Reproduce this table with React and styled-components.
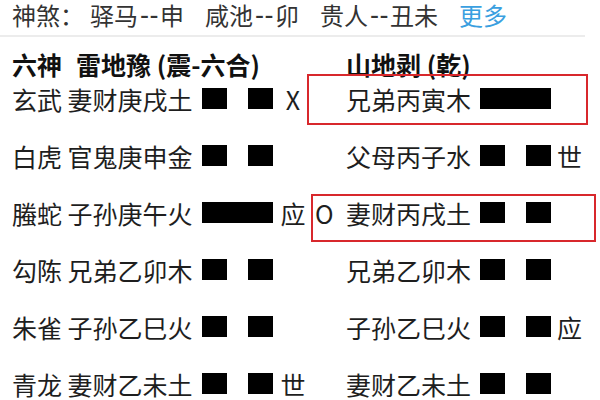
import React from "react";
import styled, { createGlobalStyle } from "styled-components";

const GlobalStyle = createGlobalStyle`
  html, body { margin: 0; padding: 0; background: #fff; }
  body {
    font-family: "Noto Sans CJK SC", "Noto Sans", sans-serif;
    color: #222;
  }
`;

const Page = styled.div`
  width: 600px;
  height: 400px;
  overflow: hidden;
  background: #fff;
`;

const ShenshaBar = styled.div`
  display: flex;
  align-items: center;
  height: 30px;
  padding: 0 12px;
  font-size: 24px;
  line-height: 28px;
  color: #333;
  white-space: nowrap;
`;

const Label = styled.span`
  margin-right: 6px;
`;

const Group = styled.span`
  display: inline-flex;
  align-items: center;
  margin-right: 21px;
`;

const Dash = styled.span`
  font-family: "Liberation Sans", sans-serif;
  font-size: 27px;
  letter-spacing: 0.5px;
  margin: 0 1px 0 2px;
`;

const More = styled.span`
  color: #3a9fe0;
`;

const Divider = styled.div`
  width: 585px;
  height: 2px;
  margin-top: 5px;
  background: #ececec;
`;

const HeaderRow = styled.div`
  display: grid;
  grid-template-columns: 334px 1fr;
  margin-top: 10px;
  height: 34px;
  padding-left: 12px;
  font-size: 25px;
  font-weight: 700;
  line-height: 34px;
  color: #111;
  white-space: nowrap;
`;

const HeadTitle = styled.span`
  margin-left: 14px;
`;

const Rows = styled.div`
  display: flex;
  flex-direction: column;
`;

const Row = styled.div`
  position: relative;
  display: grid;
  grid-template-columns: 190px 71px 38px 35px 134px 71px auto;
  align-items: start;
  height: 57px;
  padding-left: 12px;
  font-size: 25px;
  line-height: 36px;
  color: #1e1e1e;
  white-space: nowrap;
`;

const Cell = styled.span``;

const Marker = styled.span`
  text-align: center;
  padding-left: 2px;
`;

const Moving = styled.span`
  padding-left: 4px;
`;

const RightMarker = styled.span`
  padding-left: 6px;
`;

const Bars = styled.span`
  display: flex;
  justify-content: space-between;
  margin-top: 7px;
  height: 21px;
  width: 71px;
`;

const Seg = styled.span`
  display: block;
  height: 21px;
  width: ${(p) => (p.$full ? "71px" : "25px")};
  background: #000;
`;

const RedBox = styled.div`
  position: absolute;
  left: ${(p) => p.$left}px;
  top: ${(p) => p.$top}px;
  width: ${(p) => p.$width}px;
  height: ${(p) => p.$height}px;
  box-sizing: border-box;
  border: 2px solid #d8282c;
  pointer-events: none;
`;

const Line = ({ yang }) => (
  <Bars>
    {yang ? (
      <Seg $full />
    ) : (
      <>
        <Seg />
        <Seg />
      </>
    )}
  </Bars>
);

const rows = [
  {
    left: "玄武 妻财庚戌土",
    lYang: false,
    lMark: "X",
    moving: "",
    right: "兄弟丙寅木",
    rYang: true,
    rMark: "",
    box: { left: 307, top: -7, width: 281, height: 51 },
  },
  {
    left: "白虎 官鬼庚申金",
    lYang: false,
    lMark: "",
    moving: "",
    right: "父母丙子水",
    rYang: false,
    rMark: "世",
  },
  {
    left: "螣蛇 子孙庚午火",
    lYang: true,
    lMark: "应",
    moving: "O",
    right: "妻财丙戌土",
    rYang: false,
    rMark: "",
    box: { left: 311, top: -1, width: 285, height: 48 },
  },
  {
    left: "勾陈 兄弟乙卯木",
    lYang: false,
    lMark: "",
    moving: "",
    right: "兄弟乙卯木",
    rYang: false,
    rMark: "",
  },
  {
    left: "朱雀 子孙乙巳火",
    lYang: false,
    lMark: "",
    moving: "",
    right: "子孙乙巳火",
    rYang: false,
    rMark: "应",
  },
  {
    left: "青龙 妻财乙未土",
    lYang: false,
    lMark: "世",
    moving: "",
    right: "妻财乙未土",
    rYang: false,
    rMark: "",
  },
];

export default function App() {
  return (
    <Page>
      <GlobalStyle />
      <ShenshaBar>
        <Label>神煞：</Label>
        <Group>
          驿马<Dash>--</Dash>申
        </Group>
        <Group>
          咸池<Dash>--</Dash>卯
        </Group>
        <Group>
          贵人<Dash>--</Dash>丑未
        </Group>
        <More>更多</More>
      </ShenshaBar>
      <Divider />
      <HeaderRow>
        <span>
          六神<HeadTitle>雷地豫 (震-六合)</HeadTitle>
        </span>
        <span>山地剥 (乾)</span>
      </HeaderRow>
      <Rows>
        {rows.map((r, i) => (
          <Row key={i}>
            <Cell>{r.left}</Cell>
            <Line yang={r.lYang} />
            <Marker>{r.lMark}</Marker>
            <Moving>{r.moving}</Moving>
            <Cell>{r.right}</Cell>
            <Line yang={r.rYang} />
            <RightMarker>{r.rMark}</RightMarker>
            {r.box && (
              <RedBox
                $left={r.box.left}
                $top={r.box.top}
                $width={r.box.width}
                $height={r.box.height}
              />
            )}
          </Row>
        ))}
      </Rows>
    </Page>
  );
}
